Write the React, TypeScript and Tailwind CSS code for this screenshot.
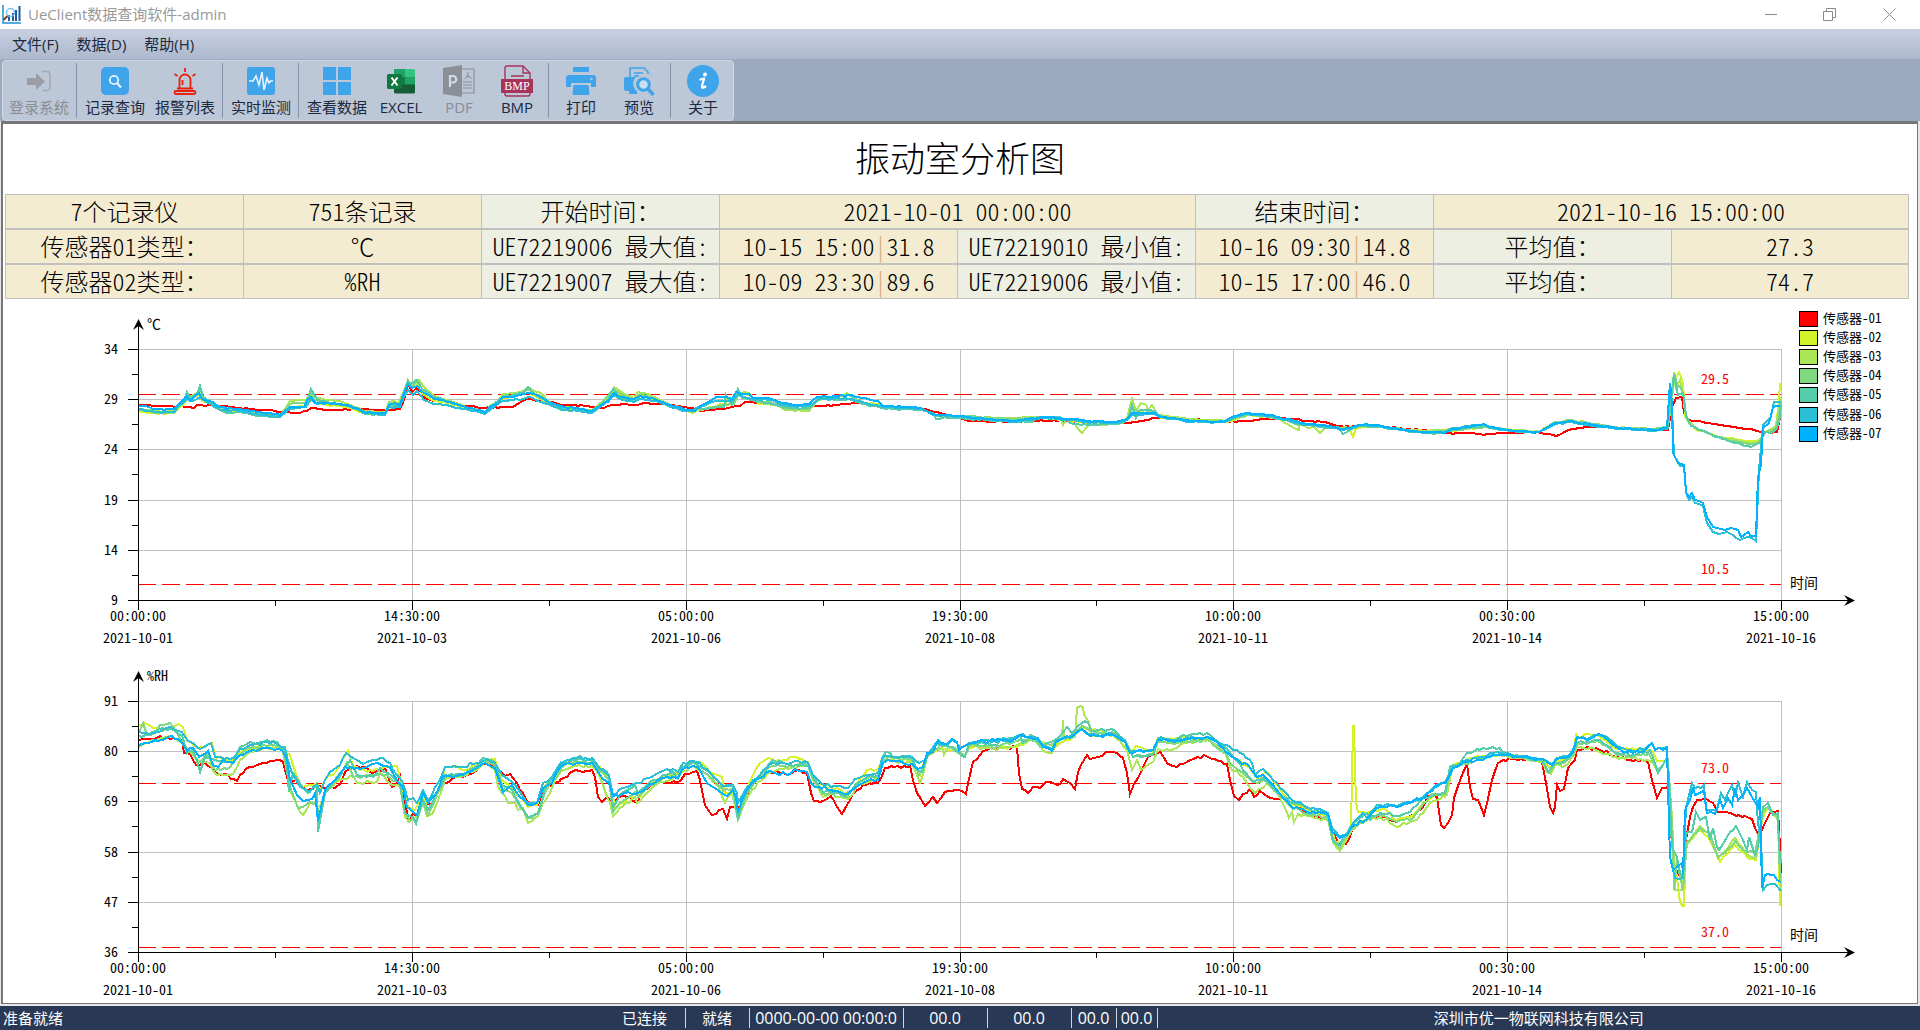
import type { ReactNode } from "react"

// ---------- chart data ----------

interface Tile {
  x: number
  y: number
  sx: number
  sy: number
}

// traces are recorded in tiles, each one with its own origin and resolution
const TEMP_TILES: Tile[] = [
  { x: 90, y: 300, sx: 2.529, sy: 3 },
  { x: 700, y: 300, sx: 2.529, sy: 3 },
  { x: 1300, y: 300, sx: 2.529, sy: 3 },
]

const HUM_TILES: Tile[] = [
  { x: 90, y: 660, sx: 3, sy: 3 },
  { x: 560, y: 660, sx: 3, sy: 3 },
  { x: 1030, y: 660, sx: 3, sy: 3 },
  { x: 1500, y: 660, sx: 3, sy: 3 },
]

const SENSORS = [
  { name: "传感器-01", color: "#ff0000", y: 311 },
  { name: "传感器-02", color: "#d4f22a", y: 330 },
  { name: "传感器-03", color: "#aae655", y: 349 },
  { name: "传感器-04", color: "#80d980", y: 368 },
  { name: "传感器-05", color: "#55ccaa", y: 387 },
  { name: "传感器-06", color: "#2bbfd5", y: 407 },
  { name: "传感器-07", color: "#00b2ff", y: 426 },
]

const TEMP: string[][] = [
  [
    "122,314 150,315 180,319 240,320 262,324 270,316 300,316 345,319 380,324 450,331 500,337 530,338 550,333 560,324 600,331 620,330 680,326 710,329 760,330 785,328 795,300 805,250 815,275 828,265 845,290 870,303 920,310 960,319 1000,324 1040,322 1070,320 1085,308 1105,297 1130,302 1160,306 1200,314 1260,319 1300,324 1320,315 1345,312 1375,314 1410,310 1450,313 1490,319 1530,326 1542,331",
    "0,333 25,330 70,325 100,317 115,305 150,310 210,312 260,316 300,318 340,316 370,312 410,308 460,318 560,326 600,337 640,350 680,363 800,366 830,362 920,362 960,366 1080,370 1120,362 1160,353 1260,358 1320,366 1380,364 1420,357 1500,356 1515,358",
    "0,360 70,368 95,378 200,380 300,389 370,400 430,398 465,405 500,400 600,397 630,402 648,408 680,390 720,380 800,382 860,386 930,390 940,320 950,293 965,290 972,340 985,360 1060,375 1140,388 1165,397 1207,397 1213,350 1215,340",
  ],
  [
    "122,334 165,340 213,340 225,324 245,300 275,286 283,304 300,308 330,328 380,334 430,345 480,352 492,340 505,322 540,318 560,292 570,310 600,316 650,320 690,340 715,344 747,342 757,312 768,310 783,316 793,280 803,250 815,260 826,252 840,282 870,302 910,310 950,324 1000,340 1015,322 1030,316 1045,294 1070,290 1095,282 1110,278 1140,298 1165,314 1200,326 1270,336 1290,318 1310,300 1325,272 1340,288 1375,302 1390,284 1430,300 1460,316 1500,332 1525,338 1542,326",
    "0,330 60,312 80,312 95,280 125,284 150,312 180,308 215,328 275,331 295,302 345,292 375,284 410,308 450,312 470,324 565,328 590,344 700,354 800,362 870,352 1000,370 1060,372 1080,358 1092,338 1150,338 1160,350 1240,362 1325,366 1350,360 1385,345 1460,354 1515,372",
    "0,372 60,380 110,384 125,385 135,410 142,385 190,378 240,386 310,394 385,392 465,382 540,392 605,396 640,370 680,362 730,371 800,384 890,388 928,382 938,330 943,260 947,215 952,235 958,215 968,245 973,350 1000,388 1060,410 1140,424 1160,420 1175,400 1205,378 1211,300 1214,250",
  ],
  [
    "122,326 165,334 213,334 225,316 245,288 260,292 279,268 287,296 300,302 330,324 380,332 430,340 480,346 492,326 505,302 545,300 560,272 570,292 600,299 630,304 660,315 690,332 747,338 757,306 768,302 780,308 793,272 803,240 815,260 822,240 832,240 845,262 870,288 910,304 950,320 1000,336 1015,316 1030,306 1045,282 1075,280 1095,272 1107,262 1140,280 1165,308 1200,322 1270,330 1290,310 1310,296 1325,260 1340,274 1375,294 1385,276 1410,282 1430,292 1460,310 1500,328 1525,334 1542,320",
    "0,330 60,318 68,298 85,312 95,285 105,278 125,278 140,300 165,312 200,318 215,330 275,333 295,300 345,292 372,280 385,292 410,308 450,315 470,326 565,328 590,345 700,352 780,355 850,350 910,352 917,375 925,360 948,372 958,390 967,400 975,385 985,375 1060,372 1080,355 1092,297 1103,332 1115,308 1127,315 1133,330 1142,314 1158,345 1240,358 1325,362 1350,358 1385,345 1460,352 1490,375 1515,390",
    "0,370 20,385 35,382 50,398 65,380 75,385 130,382 190,380 240,386 310,392 385,388 465,380 540,390 605,395 640,368 680,360 730,368 800,382 890,386 928,380 938,320 946,240 952,265 960,240 970,290 975,350 1000,385 1060,412 1140,428 1160,424 1175,395 1205,380 1212,320 1214,290",
  ],
  [
    "122,330 165,338 213,338 225,318 245,292 275,276 287,300 330,322 380,330 430,342 480,348 492,330 505,312 545,308 560,282 570,300 600,308 660,320 690,336 747,340 757,310 783,312 793,276 803,244 815,262 826,244 845,272 870,292 910,306 950,322 1000,338 1015,320 1045,288 1095,280 1107,268 1140,288 1165,312 1200,324 1270,334 1290,314 1325,268 1340,282 1375,298 1390,282 1430,296 1460,312 1500,330 1525,336 1542,322",
    "0,328 60,316 85,312 95,280 125,282 145,306 180,306 215,326 275,328 295,298 345,290 375,284 410,306 470,324 565,328 590,346 700,350 800,358 870,350 1000,368 1060,370 1080,356 1092,330 1150,334 1160,348 1240,362 1325,364 1385,344 1460,352 1515,374",
    "0,370 60,378 110,388 150,378 190,380 240,386 310,398 385,390 465,382 540,392 605,396 640,370 680,360 730,370 800,383 890,388 930,382 940,270 946,218 955,262 962,258 970,290 975,350 990,378 1050,408 1100,424 1140,432 1160,428 1175,398 1205,384 1212,340 1216,312",
  ],
  [
    "122,328 165,336 213,336 225,316 238,300 245,275 252,298 270,284 279,258 287,292 300,302 330,330 345,340 380,336 430,348 465,352 485,346 505,328 545,318 552,298 560,266 568,288 576,300 600,306 660,318 690,338 715,344 747,340 757,318 783,318 793,276 803,243 812,252 826,240 840,266 870,290 910,306 950,322 1000,338 1015,320 1045,290 1095,280 1107,262 1120,280 1165,312 1190,330 1270,332 1290,316 1310,300 1323,268 1335,288 1375,302 1390,288 1430,298 1460,314 1500,330 1525,334 1542,322",
    "0,328 60,320 65,285 80,315 95,266 105,295 130,300 165,308 210,320 250,326 280,322 300,297 350,300 385,300 410,312 470,326 560,330 590,340 597,357 620,352 720,360 800,365 840,365 860,352 910,352 945,372 990,374 1070,370 1082,358 1092,315 1103,355 1112,330 1148,332 1160,350 1240,364 1325,366 1385,340 1460,356 1515,372",
    "0,372 80,385 95,382 110,402 130,388 150,378 190,380 310,398 340,402 380,392 465,378 540,394 605,397 640,372 680,362 730,372 800,384 890,390 930,384 938,300 946,225 955,285 968,280 975,345 990,378 1050,410 1100,428 1140,440 1160,430 1175,395 1190,398 1207,385 1213,350 1216,310",
  ],
  [
    "122,328 165,336 213,336 225,318 245,298 260,302 279,290 290,302 330,330 380,334 430,344 480,350 492,338 505,326 545,322 560,298 575,312 600,310 660,318 690,338 747,344 757,322 783,320 793,290 803,270 817,284 828,272 845,300 870,312 910,318 950,328 1000,342 1015,326 1045,302 1095,298 1110,290 1140,306 1165,316 1200,330 1270,338 1290,322 1325,286 1340,298 1375,306 1390,298 1430,302 1460,316 1500,332 1525,334 1542,318",
    "0,322 20,312 40,302 80,304 95,286 130,297 180,300 210,314 245,320 280,316 300,296 375,296 410,306 462,322 560,326 590,344 650,350 720,358 800,365 870,354 1000,368 1060,370 1080,360 1092,344 1150,342 1160,350 1240,365 1325,367 1345,354 1380,341 1440,348 1515,370",
    "0,373 60,378 90,385 110,391 150,376 190,377 240,388 310,398 370,397 385,385 430,378 465,372 480,384 540,394 605,397 640,374 680,366 730,375 800,386 890,392 928,386 936,250 941,320 946,465 960,497 971,498 975,580 985,600 992,590 1000,608 1018,618 1030,670 1045,695 1060,702 1080,695 1095,705 1112,720 1132,710 1152,722 1160,510 1170,375 1190,350 1200,305 1216,305",
  ],
  [
    "122,318 140,319 170,328 213,327 225,312 245,288 252,303 275,278 283,298 300,302 330,322 380,328 430,337 480,344 492,332 505,320 540,322 550,300 560,290 570,308 600,309 650,315 690,334 715,340 747,338 757,316 768,310 783,316 793,280 803,252 815,265 826,258 840,277 870,296 910,306 950,320 1000,336 1015,318 1030,312 1045,292 1070,290 1095,282 1110,278 1140,290 1165,310 1200,320 1270,332 1290,318 1310,305 1325,278 1340,290 1375,298 1390,287 1430,297 1460,312 1500,326 1530,334 1542,320",
    "0,318 20,305 40,292 65,290 80,298 92,275 105,283 125,283 135,293 180,296 210,308 245,316 275,312 295,290 340,289 375,284 400,292 450,304 462,317 560,323 590,342 650,347 720,356 800,363 870,350 1000,364 1050,366 1080,358 1092,338 1110,340 1150,338 1160,348 1240,363 1325,365 1345,352 1380,338 1440,345 1515,366",
    "0,370 60,375 110,388 150,375 190,375 240,385 310,396 370,396 385,388 430,380 465,373 480,382 540,392 605,396 640,372 680,364 730,373 800,384 890,390 928,384 936,250 940,310 943,460 955,490 970,495 975,575 985,592 992,580 1000,600 1020,608 1030,650 1045,682 1075,690 1090,684 1108,690 1115,712 1132,696 1140,708 1152,708 1158,530 1165,495 1170,385 1185,370 1195,320 1215,318",
  ],
]

const HUM: string[][] = [
  [
    "147,241 180,236 230,232 275,240 282,280 300,283 318,315 345,308 365,325 385,342 415,345 422,357 440,363 450,345 480,322 520,308 560,299 578,305 592,350 600,375 620,360 650,395 680,375 700,385 735,383 752,370 765,335 790,318 820,322 850,338 885,325 905,380 920,372 930,348 945,430 958,484 968,460 980,470 998,400 1010,432 1030,432 1045,390 1060,370 1100,352 1140,343 1170,322 1200,308 1220,325 1245,348 1260,342 1280,370 1300,400 1318,432 1345,436 1360,390 1395,370 1409,362",
    "0,360 20,350 40,333 95,331 105,350 115,412 125,425 140,412 155,424 190,408 215,420 235,424 245,400 285,362 350,368 375,342 410,333 420,360 435,435 455,465 490,448 502,476 510,440 530,440 545,440 570,385 595,352 630,335 690,342 705,332 740,338 752,400 762,423 790,423 812,408 830,440 847,462 860,435 890,390 910,375 955,368 975,323 1050,318 1060,360 1070,400 1095,438 1120,412 1132,430 1155,395 1195,390 1218,402 1225,370 1240,305 1270,272 1300,265 1370,260 1378,340 1387,388 1405,398 1409,392",
    "0,392 10,380 30,383 48,366 90,372 98,358 120,370 135,386 145,335 172,285 180,298 205,292 228,277 250,277 280,295 290,340 300,403 312,372 335,330 355,292 390,277 410,310 440,320 470,305 522,285 545,298 592,312 600,360 613,408 627,420 640,402 660,385 672,412 690,392 713,412 745,418 760,415 790,436 850,465 895,480 905,510 930,560 948,552 970,500 1010,480 1050,468 1100,485 1150,465 1180,440 1195,408 1220,410 1232,495 1242,505 1265,465 1272,415 1295,345 1312,312 1320,380 1330,418 1345,420 1363,465 1372,430 1385,360 1405,308 1409,306",
    "0,305 45,296 100,300 125,305 138,370 150,440 158,460 165,440 170,375 180,392 192,388 205,325 225,300 230,270 265,262 300,270 350,292 400,302 445,305 455,360 472,414 485,384 505,382 510,480 522,620 540,650 550,650 557,540 570,470 590,420 615,413 640,430 655,455 690,458 755,478 765,505 778,528 795,490 810,460 833,452 840,560 843,640",
  ],
  [
    "147,195 165,190 190,205 220,210 265,192 280,200 290,240 325,265 365,250 378,295 430,300 450,275 500,262 580,265 600,285 620,350 635,380 660,375 680,370 690,390 705,360 740,330 775,272 790,315 830,335 885,320 920,318 940,390 955,440 975,450 998,400 1015,450 1045,390 1065,320 1090,320 1130,330 1180,300 1215,298 1235,360 1290,410 1315,440 1340,435 1360,385 1409,320",
    "0,325 20,310 95,308 120,320 150,365 165,440 195,425 225,395 240,410 270,370 340,340 365,325 400,303 420,305 450,335 485,350 495,400 520,395 535,470 555,400 575,350 600,310 625,293 645,305 700,292 745,305 760,345 785,375 830,385 865,400 890,370 920,330 955,328 970,300 1055,302 1080,345 1100,285 1140,265 1180,270 1215,285 1228,262 1370,262 1409,240",
    "0,238 55,248 70,262 130,232 160,200 250,225 300,275 318,258 370,275 385,235 530,235 600,285 660,325 680,355 710,335 740,375 780,430 895,470 915,545 940,545 963,500 966,352 968,198 972,198 975,320 978,430 985,455 1010,460 1060,445 1100,480 1150,465 1180,430 1215,405 1245,410 1265,320 1310,300 1340,288 1409,285",
    "0,285 60,292 125,300 150,325 170,300 200,300 222,275 228,218 235,235 265,222 300,232 350,268 440,270 460,275 470,302 490,302 505,300 515,560 530,650 537,710 547,738 553,738 558,550 600,510 625,530 660,605 690,570 705,555 740,590 768,600 785,480 805,445 835,475 840,737",
  ],
  [
    "147,262 165,250 205,238 240,228 275,245 300,275 325,300 360,310 380,345 430,342 450,300 480,275 550,262 580,275 600,390 620,435 640,466 660,430 675,430 690,440 710,390 750,360 790,345 800,370 860,365 870,340 900,372 930,378 945,470 958,486 980,470 998,430 1012,468 1030,460 1045,420 1065,358 1110,350 1150,335 1190,305 1215,330 1225,380 1255,428 1275,430 1285,450 1300,445 1315,488 1345,468 1360,430 1380,400 1395,360 1409,340",
    "0,335 40,318 95,318 115,340 140,410 150,430 160,468 180,445 225,410 232,430 260,400 290,372 330,360 360,340 400,318 430,340 470,370 495,430 515,400 533,480 550,440 575,390 625,340 650,330 745,315 760,360 790,410 815,400 840,410 865,418 890,375 955,355 965,310 985,300 1055,310 1080,368 1090,345 1100,290 1145,262 1153,285 1165,262 1215,285 1230,258 1300,268 1350,262 1370,255 1409,240",
    "0,240 30,250 38,272 65,280 80,250 95,235 98,180 102,235 135,232 140,145 158,140 163,165 178,185 182,225 250,225 290,270 307,330 320,300 333,330 345,320 370,305 385,268 400,272 440,265 460,248 535,240 585,275 600,322 640,352 660,385 675,400 710,370 745,400 778,475 785,455 793,485 805,462 860,475 895,480 910,545 930,572 955,530 985,485 1050,470 1100,500 1160,480 1200,430 1250,405 1265,325 1310,302 1380,288 1409,286",
    "0,286 60,294 125,305 140,335 152,342 165,315 195,318 222,285 230,262 270,265 340,290 440,300 460,310 475,335 500,295 507,360 517,470 525,690 545,690 558,555 600,498 625,520 655,595 705,535 740,585 768,595 790,460 805,440 835,480 842,690",
  ],
  [
    "147,220 160,190 170,225 195,220 210,195 240,190 260,215 285,265 310,280 325,310 350,280 375,330 420,320 445,290 470,265 550,255 580,268 600,380 625,445 640,440 660,425 680,435 687,470 705,400 750,350 770,305 790,350 860,345 890,345 930,375 945,460 960,480 980,480 1000,425 1015,465 1045,400 1065,352 1110,348 1150,330 1185,300 1215,315 1235,385 1265,400 1290,440 1315,475 1345,462 1365,395 1409,332",
    "0,330 20,308 95,306 112,325 148,360 160,455 180,430 225,395 235,410 270,375 340,342 355,358 370,325 400,308 430,335 460,360 490,392 518,385 535,470 545,440 575,378 625,325 645,318 690,318 745,312 760,355 790,402 830,400 860,412 885,378 920,355 955,350 967,302 985,292 1055,300 1078,345 1090,330 1100,288 1140,256 1180,262 1215,288 1230,255 1310,260 1380,240 1409,238",
    "0,238 40,262 75,245 130,225 155,198 175,208 185,222 245,216 285,244 310,290 370,282 385,245 440,250 530,238 590,285 600,310 650,350 680,370 700,360 740,398 780,438 830,462 895,475 910,545 930,565 960,510 1010,480 1050,465 1100,485 1150,475 1200,405 1245,402 1265,320 1330,305 1380,285 1409,284",
    "0,284 60,292 125,302 148,340 168,310 192,310 222,280 232,252 300,245 350,284 400,290 448,282 475,330 500,292 510,384 518,560 523,690 530,600 550,690 560,545 600,505 630,520 655,590 675,580 705,542 730,570 765,580 790,450 805,440 833,475 840,660",
  ],
  [
    "147,228 175,225 210,208 240,208 275,225 290,280 310,270 330,335 345,292 375,300 430,305 450,262 470,252 550,243 585,262 597,395 610,340 640,385 655,400 680,380 685,515 695,450 705,400 750,340 780,300 800,345 850,352 870,325 895,340 930,370 945,460 970,470 978,492 998,420 1015,450 1045,390 1065,345 1110,345 1150,325 1180,294 1215,305 1235,375 1265,390 1290,435 1315,470 1345,460 1365,385 1409,325",
    "0,322 20,300 95,300 110,320 148,345 160,440 180,405 225,375 235,400 270,365 340,335 355,355 370,320 400,306 430,325 460,350 490,380 518,375 535,480 545,430 575,375 625,315 640,300 690,315 745,318 760,350 790,395 830,395 855,412 885,375 920,350 955,345 965,295 978,275 1000,290 1055,295 1070,330 1085,335 1100,290 1130,250 1175,262 1195,275 1215,292 1228,248 1310,255 1320,240 1380,228 1390,250 1409,226",
    "0,225 40,255 75,240 100,215 112,202 125,220 155,188 175,190 185,212 245,208 285,240 310,290 370,285 385,238 440,238 460,225 530,220 600,275 640,330 670,365 700,355 740,395 780,425 895,465 910,540 930,555 960,500 1010,458 1020,480 1050,460 1110,468 1140,455 1180,415 1245,400 1260,320 1290,310 1310,280 1360,265 1409,264",
    "0,268 20,278 60,290 125,300 145,335 165,310 190,305 220,280 232,248 300,240 350,280 400,285 450,270 462,300 475,340 500,290 505,300 515,560 530,590 540,640 550,650 557,520 575,515 588,455 600,480 618,470 630,540 640,505 650,560 657,570 680,530 708,498 725,535 740,570 748,530 765,585 775,560 790,440 805,428 820,465 833,460 838,560 843,610",
  ],
  [
    "147,216 180,222 205,215 240,202 275,215 290,240 310,250 330,268 362,250 375,290 430,295 450,268 500,250 550,247 585,265 605,340 630,380 660,395 680,372 690,400 705,360 720,335 750,315 768,280 800,300 820,312 870,294 900,308 920,345 940,370 955,420 970,415 980,430 998,390 1015,420 1045,370 1065,322 1110,322 1160,308 1190,298 1215,308 1235,345 1265,365 1290,395 1315,430 1340,430 1360,370 1385,350 1409,312",
    "0,318 20,300 50,293 95,295 110,312 148,348 158,405 190,385 230,368 265,355 300,335 340,328 355,335 370,310 400,303 420,310 450,340 490,378 520,375 530,400 535,430 560,380 590,355 610,330 640,310 680,312 705,302 745,310 760,345 785,372 830,378 865,385 885,358 920,345 955,340 970,290 1055,292 1078,308 1095,300 1110,275 1130,245 1160,255 1175,240 1190,248 1200,265 1230,250 1265,242 1340,242 1380,224 1409,230",
    "0,232 25,235 40,258 65,268 78,242 130,226 155,206 180,226 250,222 285,242 300,275 368,270 385,236 440,240 530,230 600,262 620,270 665,308 675,345 700,328 740,370 780,415 830,440 895,458 905,505 930,530 950,522 970,490 1000,458 1012,475 1040,435 1110,436 1170,418 1215,378 1245,366 1270,322 1310,300 1350,292 1390,280 1409,280",
    "0,280 60,288 125,296 155,312 170,295 205,288 220,270 230,232 270,235 295,225 325,235 355,260 380,270 430,270 455,248 465,268 500,262 505,380 510,590 525,655 550,655 557,440 577,368 585,385 612,375 618,450 650,450 662,398 675,420 695,375 705,410 715,370 730,410 742,365 755,390 768,395 775,490 783,540 790,690 800,675 825,672 842,692",
  ],
  [
    "147,256 165,248 205,243 235,230 265,238 290,272 310,265 328,290 355,272 370,315 385,322 400,300 430,310 450,285 490,270 540,263 575,270 590,300 600,360 620,405 640,424 665,418 675,400 685,482 695,430 705,390 740,355 765,322 810,328 860,308 900,325 925,365 940,380 950,440 970,455 980,465 998,400 1015,430 1045,390 1060,348 1100,348 1150,330 1185,308 1215,325 1230,370 1240,395 1265,375 1290,410 1315,435 1340,430 1360,385 1385,370 1400,332 1409,325",
    "0,322 15,312 50,310 95,310 110,330 130,358 148,370 158,408 195,400 235,400 260,382 300,358 340,350 355,355 365,330 400,318 420,330 440,368 465,385 500,408 518,390 528,410 533,460 545,420 575,370 600,355 630,332 650,342 690,342 705,328 740,335 752,370 775,382 840,395 865,402 885,385 920,362 955,360 968,310 985,300 1030,308 1055,312 1075,328 1090,322 1100,280 1120,275 1135,240 1160,252 1175,238 1190,245 1198,270 1225,252 1265,240 1280,248 1295,238 1340,240 1350,245 1380,225 1409,232",
    "0,235 25,238 40,262 65,272 78,245 100,235 130,228 155,208 180,228 250,225 285,245 300,278 370,270 385,240 440,242 530,232 560,245 605,292 655,315 680,350 700,345 740,390 780,435 830,455 895,462 905,515 930,535 950,525 970,495 1000,485 1050,440 1110,438 1150,422 1185,412 1215,380 1245,370 1270,325 1310,305 1350,300 1390,284 1409,284",
    "0,284 60,290 125,298 155,315 170,298 205,290 220,275 230,235 270,238 295,222 325,240 355,265 380,275 430,275 455,248 465,270 500,265 505,380 510,590 520,630 545,610 550,640 555,450 570,420 580,380 585,405 612,392 622,460 645,462 660,420 670,445 685,415 695,435 705,385 715,420 740,385 755,410 775,440 780,410 785,685 795,645 822,645 830,660 842,665",
  ],
]

function toPoints(parts: string[], tiles: Tile[], ripple: number, seed: number) {
  const pts = parts.flatMap((part, i) =>
    part.split(" ").map((pair) => {
      const [u, v] = pair.split(",").map(Number)
      return [tiles[i].x + u / tiles[i].sx, tiles[i].y + v / tiles[i].sy]
    })
  )
  const out: string[] = []
  for (let i = 0; i < pts.length - 1; i++) {
    const [x0, y0] = pts[i]
    const [x1, y1] = pts[i + 1]
    out.push(`${Math.round(x0)},${Math.round(y0)}`)
    const n = Math.floor((x1 - x0) / 3)
    for (let k = 1; k < n; k++) {
      const x = x0 + ((x1 - x0) * k) / n
      const y = y0 + ((y1 - y0) * k) / n
      const noise = Math.sin(x * 1.7 + seed * 5) * Math.cos(x * 0.61 + seed) * ripple
      out.push(`${Math.round(x)},${Math.round(y + noise)}`)
    }
  }
  const last = pts[pts.length - 1]
  out.push(`${Math.round(last[0])},${Math.round(last[1])}`)
  return out.join(" ")
}

// ---------- chart ----------

const TIMES = [
  { x: 138, time: "00:00:00", date: "2021-10-01" },
  { x: 412, time: "14:30:00", date: "2021-10-03" },
  { x: 686, time: "05:00:00", date: "2021-10-06" },
  { x: 960, time: "19:30:00", date: "2021-10-08" },
  { x: 1233, time: "10:00:00", date: "2021-10-11" },
  { x: 1507, time: "00:30:00", date: "2021-10-14" },
  { x: 1781, time: "15:00:00", date: "2021-10-16" },
]

const ROWS = [0, 50, 100, 151, 201, 251]

interface PlotProps {
  top: number
  unit: string
  ticks: number[]
  limits: { y: number; label: string }[]
  series: string[][]
  tiles: Tile[]
  ripple: number
}

function Plot({ top, unit, ticks, limits, series, tiles, ripple }: PlotProps) {
  const bottom = top + 251
  return (
    <g>
      <g stroke="#c0c0c0" shapeRendering="crispEdges">
        {ROWS.slice(0, 5).map((r) => (
          <line key={r} x1={138} x2={1781} y1={top + r + 0.5} y2={top + r + 0.5} />
        ))}
        {TIMES.slice(1).map((t) => (
          <line key={t.x} x1={t.x + 0.5} x2={t.x + 0.5} y1={top} y2={bottom} />
        ))}
      </g>

      <g stroke="#ff0000" strokeDasharray="18 6" shapeRendering="crispEdges">
        {limits.map((l) => (
          <line key={l.label} x1={138} x2={1781} y1={l.y + 0.5} y2={l.y + 0.5} />
        ))}
      </g>

      <g fill="none" strokeWidth="2" shapeRendering="crispEdges">
        {series.map((parts, i) => (
          <polyline key={i} points={toPoints(parts, tiles, ripple, i)} stroke={SENSORS[i].color} />
        ))}
      </g>

      <g stroke="#000" shapeRendering="crispEdges">
        <line x1={138.5} x2={138.5} y1={top - 26} y2={bottom + 10} />
        <line x1={128} x2={1850} y1={bottom + 0.5} y2={bottom + 0.5} />
        {ROWS.slice(0, 5).map((r) => (
          <g key={r}>
            <line x1={128} x2={138} y1={top + r + 0.5} y2={top + r + 0.5} />
            <line x1={132} x2={138} y1={top + r + 25.5} y2={top + r + 25.5} />
          </g>
        ))}
        {TIMES.slice(1).map((t) => (
          <g key={t.x}>
            <line x1={t.x + 0.5} x2={t.x + 0.5} y1={bottom} y2={bottom + 10} />
            <line x1={t.x - 136.5} x2={t.x - 136.5} y1={bottom} y2={bottom + 6} />
          </g>
        ))}
      </g>
      <path d={`M138.5 ${top - 30}l5.500 11-5.500-4-5.500 4z`} />
      <path d={`M1855 ${bottom + 0.5}l-11 5.500 4-5.500-4-5.500z`} />

      <text x={147} y={top - 20}>{unit}</text>
      {ticks.map((t, i) => (
        <text key={t} x={118} y={top + ROWS[i] + 5} textAnchor="end">{t}</text>
      ))}
      {TIMES.map((t) => (
        <g key={t.x} textAnchor="middle">
          <text x={t.x} y={bottom + 21}>{t.time}</text>
          <text x={t.x} y={bottom + 43}>{t.date}</text>
        </g>
      ))}
      {limits.map((l) => (
        <text key={l.label} x={1701} y={l.y - 10} fill="#ff0000">{l.label}</text>
      ))}
      <text x={1790} y={bottom - 12}>时间</text>
    </g>
  )
}

function Charts() {
  return (
    <svg
      viewBox="3 299 1914 704"
      className="block w-full text-[14px]"
      role="img"
      aria-label="振动室分析图"
    >
      <Plot
        top={349}
        unit="℃"
        ticks={[34, 29, 24, 19, 14, 9]}
        limits={[{ y: 394, label: "29.5" }, { y: 584, label: "10.5" }]}
        series={TEMP}
        tiles={TEMP_TILES}
        ripple={0.6}
      />
      <Plot
        top={701}
        unit="%RH"
        ticks={[91, 80, 69, 58, 47, 36]}
        limits={[{ y: 783, label: "73.0" }, { y: 947, label: "37.0" }]}
        series={HUM}
        tiles={HUM_TILES}
        ripple={1.6}
      />
      {SENSORS.map((s) => (
        <g key={s.name}>
          <rect x={1799.5} y={s.y + 0.5} width={18} height={15} fill={s.color} stroke="#000" shapeRendering="crispEdges" />
          <text x={1823} y={s.y + 12} className="text-[13px]">{s.name}</text>
        </g>
      ))}
    </svg>
  )
}

// ---------- summary table ----------

const VALUE = "h-[35px] border-y border-l border-[#c0c0c0] bg-[#f4ecd1] p-0 pb-[2px] text-center font-light last:border-r"
const LABEL = "h-[35px] border-y border-l border-[#c0c0c0] bg-[#eeefe3] p-0 pb-[2px] text-center font-light last:border-r"

interface SensorRow {
  type: string
  unit: string
  maxName: string
  maxTime: string
  max: string
  minName: string
  minTime: string
  min: string
  avg: string
}

const SENSOR_ROWS: SensorRow[] = [
  { type: "传感器01类型：", unit: "℃", maxName: "UE72219006 最大值:", maxTime: "10-15 15:00", max: "31.8", minName: "UE72219010 最小值:", minTime: "10-16 09:30", min: "14.8", avg: "27.3" },
  { type: "传感器02类型：", unit: "%RH", maxName: "UE72219007 最大值:", maxTime: "10-09 23:30", max: "89.6", minName: "UE72219006 最小值:", minTime: "10-15 17:00", min: "46.0", avg: "74.7" },
]

function SummaryTable() {
  return (
    <div className="pr-2 pl-[2px]">
      <table className="w-full table-fixed border-separate border-spacing-0 text-[24px] leading-[30px] whitespace-nowrap">
        <tbody>
          <tr>
            <td className={VALUE}>7个记录仪</td>
            <td className={VALUE}>751条记录</td>
            <th className={LABEL}>开始时间：</th>
            <td className={VALUE} colSpan={2}>2021-10-01 00:00:00</td>
            <th className={LABEL}>结束时间：</th>
            <td className={VALUE} colSpan={2}>2021-10-16 15:00:00</td>
          </tr>
          {SENSOR_ROWS.map((row) => (
            <tr key={row.type}>
              <th className={VALUE}>{row.type}</th>
              <td className={VALUE}>{row.unit}</td>
              <th className={LABEL}>{row.maxName}</th>
              <td className={VALUE}>{row.maxTime}<span className="text-[#d9a878]">|</span>{row.max}</td>
              <th className={LABEL}>{row.minName}</th>
              <td className={VALUE}>{row.minTime}<span className="text-[#d9a878]">|</span>{row.min}</td>
              <th className={LABEL}>平均值：</th>
              <td className={VALUE}>{row.avg}</td>
            </tr>
          ))}
        </tbody>
      </table>
    </div>
  )
}

// ---------- icons ----------

function AppIcon() {
  return (
    <svg width="20" height="20" viewBox="0 0 20 20" fill="none">
      <path d="M1 1v18h18" stroke="#1b8fd2" strokeWidth="1.500" />
      <path d="M7 17v-6M11 17V9M14 17V6M17.500 17V2" stroke="#1d5c9c" strokeWidth="2" />
      <circle cx="8.500" cy="8.500" r="4" stroke="#7cc4ee" strokeWidth="1.500" />
      <path d="M5.500 12L1.500 16" stroke="#7a3b2e" strokeWidth="2" />
    </svg>
  )
}

function LoginIcon() {
  return (
    <svg width="32" height="32" viewBox="0 0 32 32" fill="none">
      <path d="M4 13h9V8l9 8.500-9 8.500v-5H4z" fill="#9a9da3" />
      <path d="M19 6.500h5a3 3 0 0 1 3 3v13a3 3 0 0 1-3 3h-5" stroke="#a4a8b0" strokeWidth="1.500" />
    </svg>
  )
}

function QueryIcon() {
  return (
    <svg width="32" height="32" viewBox="0 0 32 32" fill="none">
      <rect x="2" y="2" width="28" height="28" rx="5" fill="#3fa4ea" />
      <circle cx="15" cy="15" r="4.200" stroke="#e8f3fc" strokeWidth="1.800" />
      <path d="M18 18l4 4.500" stroke="#e8f3fc" strokeWidth="2.200" />
    </svg>
  )
}

function AlarmIcon() {
  return (
    <svg width="32" height="32" viewBox="0 0 32 32" fill="none" stroke="#e8220c" strokeWidth="1.800">
      <path d="M10.500 23v-8a5.500 5.500 0 0 1 11 0v8" />
      <path d="M13.500 20v-5" />
      <path d="M16 3v4M5.500 9l3 2M26.500 9l-3 2M8 23.500h16" />
      <rect x="5.500" y="26" width="21" height="3" rx="1.500" />
    </svg>
  )
}

function MonitorIcon() {
  return (
    <svg width="32" height="32" viewBox="0 0 32 32" fill="none">
      <rect x="2" y="2" width="28" height="28" rx="3" fill="#3fa4ea" />
      <path d="M4 16h4l3-5 3 9 3-13 2 18 3-12 2 5 1.500-2H28" stroke="#e8f3fc" strokeWidth="1.600" />
    </svg>
  )
}

function GridIcon() {
  return (
    <svg width="32" height="32" viewBox="0 0 32 32" fill="#3fa4ea">
      <path d="M2 2h13v13H2zM17 2h13v13H17zM2 17h13v13H2zM17 17h13v13H17z" />
    </svg>
  )
}

function ExcelIcon() {
  return (
    <svg width="32" height="32" viewBox="0 0 32 32">
      <path d="M9 4h11v8H9z" fill="#21a366" />
      <path d="M20 4h8a2 2 0 0 1 2 2v6H20z" fill="#33c481" />
      <path d="M9 12h11v8H9z" fill="#107c41" />
      <path d="M20 12h10v8H20z" fill="#21a366" />
      <path d="M9 20h21v7a1.500 1.500 0 0 1-1.500 1.500h-18A1.500 1.500 0 0 1 9 27z" fill="#185c37" />
      <path d="M20 20h10v-1H20z" fill="#107c41" />
      <rect x="2" y="9" width="15" height="15" rx="1.500" fill="#10793f" />
      <path d="M6.500 12.500l6 8M12.500 12.500l-6 8" stroke="#fff" strokeWidth="2" />
    </svg>
  )
}

function PdfIcon() {
  return (
    <svg width="32" height="32" viewBox="0 0 32 32" fill="none">
      <path d="M0 3l19-3v32L0 29z" fill="#8b9096" />
      <path d="M7 22V11h3a3.200 3.200 0 0 1 0 6.500H7" stroke="#d5dbe4" strokeWidth="2.200" />
      <path d="M19 4h12v24H19" stroke="#8b9096" strokeWidth="1.200" />
      <path d="M25 7c0 3-1 5-3.500 7M25 10c1 2 2 3 4 3.500M23 12l4-.5M20 17h9M20 20h9M20 23h9" stroke="#8b9096" />
    </svg>
  )
}

function BmpIcon() {
  return (
    <svg width="32" height="32" viewBox="0 0 32 32" fill="none">
      <path d="M4 14V3a2 2 0 0 1 2-2h16l7 7v6M22 1v7h7M4 28v1a2 2 0 0 0 2 2h21a2 2 0 0 0 2-2v-1M10 11h13" stroke="#a8345a" strokeWidth="1.400" />
      <rect y="14" width="32" height="14" fill="#a8345a" />
      <text x="16" y="25" textAnchor="middle" fill="#fff" className="font-['Liberation_Serif',serif] text-[12px]">BMP</text>
    </svg>
  )
}

function PrintIcon() {
  return (
    <svg width="32" height="32" viewBox="0 0 32 32" fill="#3fa4ea">
      <path d="M8 2h16v5H8z" />
      <path d="M4 10h24a3 3 0 0 1 3 3v8a1 1 0 0 1-1 1h-4v-4H6v4H2a1 1 0 0 1-1-1v-8a3 3 0 0 1 3-3z" />
      <path d="M8.500 20h15l1 9a1 1 0 0 1-1 1h-15a1 1 0 0 1-1-1z" />
      <circle cx="26.500" cy="14" r="1.200" fill="#bcc7d8" />
    </svg>
  )
}

function PreviewIcon() {
  return (
    <svg width="32" height="32" viewBox="0 0 32 32" fill="none">
      <path d="M7 14V3h14l4 4v2" stroke="#3fa4ea" strokeWidth="1.600" />
      <path d="M11 8h9M11 11h5" stroke="#3fa4ea" strokeWidth="1.500" />
      <path d="M1 14a2 2 0 0 1 2-2h10a9 9 0 0 0 1 14v3H6v-3H3a2 2 0 0 1-2-2z" fill="#3fa4ea" />
      <circle cx="20.500" cy="19.500" r="5.800" stroke="#3fa4ea" strokeWidth="3" fill="#c9ddf1" />
      <path d="M25 24l5.500 6" stroke="#3fa4ea" strokeWidth="3.600" />
      <path d="M26 8l4 4M28 7l2 2" stroke="#8fc6ee" />
    </svg>
  )
}

function AboutIcon() {
  return (
    <svg width="32" height="32" viewBox="0 0 32 32">
      <circle cx="16" cy="16" r="16" fill="#3fa4ea" />
      <circle cx="18" cy="9.500" r="2" fill="#fff" />
      <path d="M12.500 15c2-1 3.500-1.500 4.500-1.500-.5 3-2 6-2 8.500 0 1.500 2 .5 4-1" fill="none" stroke="#fff" strokeWidth="2.200" />
    </svg>
  )
}

// ---------- toolbar ----------

interface ToolButtonProps {
  label: string
  icon: ReactNode
  disabled?: boolean
  wide?: boolean
}

function ToolButton({ label, icon, disabled, wide }: ToolButtonProps) {
  return (
    <button
      type="button"
      disabled={disabled}
      className={`${wide ? "w-[70px]" : "w-[58px]"} flex flex-col items-center pt-1 text-[15px] leading-5 text-[#1b293e] disabled:text-[#8a8d92]`}
    >
      {icon}
      {label}
    </button>
  )
}

function Separator() {
  return <div className="my-[2px] ml-[2px] w-1 border-l border-[#8592a8]" />
}

function Toolbar() {
  return (
    <div className="flex h-[62px] bg-[#9ba9c1] pt-px pl-[2px]">
      <div className="flex rounded-sm border border-[#cfd7e4] bg-[#bcc7d8] px-px">
        <ToolButton wide disabled label="登录系统" icon={<LoginIcon />} />
        <Separator />
        <ToolButton wide label="记录查询" icon={<QueryIcon />} />
        <ToolButton wide label="报警列表" icon={<AlarmIcon />} />
        <Separator />
        <ToolButton wide label="实时监测" icon={<MonitorIcon />} />
        <Separator />
        <ToolButton wide label="查看数据" icon={<GridIcon />} />
        <ToolButton label="EXCEL" icon={<ExcelIcon />} />
        <ToolButton disabled label="PDF" icon={<PdfIcon />} />
        <ToolButton label="BMP" icon={<BmpIcon />} />
        <Separator />
        <ToolButton label="打印" icon={<PrintIcon />} />
        <ToolButton label="预览" icon={<PreviewIcon />} />
        <Separator />
        <ToolButton label="关于" icon={<AboutIcon />} />
      </div>
    </div>
  )
}

// ---------- frame ----------

function TitleBar() {
  return (
    <header className="flex h-[29px] items-center justify-between bg-white pb-px pl-[2px]">
      <div className="flex items-center gap-[6px] text-[15px] leading-5 text-[#999999]">
        <AppIcon />
        <span>UeClient数据查询软件-admin</span>
      </div>
      <div className="flex text-[#8a8a8a]">
        <button type="button" aria-label="最小化" className="grid h-7 w-[58px] place-items-center">
          <svg width="12" height="12" stroke="currentColor"><path d="M0 6.500h12" /></svg>
        </button>
        <button type="button" aria-label="还原" className="grid h-7 w-[58px] place-items-center">
          <svg width="13" height="13" fill="none" stroke="currentColor"><path d="M.5 3.500h9v9h-9zM3.500 3V.5h9v9H10" /></svg>
        </button>
        <button type="button" aria-label="关闭" className="grid h-7 w-[62px] place-items-center">
          <svg width="13" height="13" stroke="currentColor"><path d="M.5.5l12 12M12.500.5l-12 12" /></svg>
        </button>
      </div>
    </header>
  )
}

function MenuBar() {
  return (
    <nav className="flex h-[30px] items-center gap-[18px] bg-linear-to-b from-[#c9d1e1] to-[#adb8ce] pl-3 text-[15px] leading-5 text-[#1b293e]">
      <button type="button">文件(F)</button>
      <button type="button">数据(D)</button>
      <button type="button">帮助(H)</button>
    </nav>
  )
}

const CELL = "my-[2px] overflow-hidden border-r border-[#d0d5de] text-center"
const NUMBER_CELL = "my-[2px] overflow-hidden border-r border-[#d0d5de] text-center text-base leading-5"

function StatusBar() {
  return (
    <footer className="grid h-6 grid-cols-[605fr_81px_64px_154px_84px_84px_45px_41px_763fr] bg-[#293955] text-[15px] leading-5 whitespace-nowrap text-white">
      <div className="my-[2px] pl-[3px]">准备就绪</div>
      <div className={CELL}>已连接</div>
      <div className={CELL}>就绪</div>
      <div className={NUMBER_CELL}>0000-00-00 00:00:0</div>
      <div className={NUMBER_CELL}>00.0</div>
      <div className={NUMBER_CELL}>00.0</div>
      <div className={NUMBER_CELL}>00.0</div>
      <div className={NUMBER_CELL}>00.0</div>
      <div className="my-[2px] text-center">深圳市优一物联网科技有限公司</div>
    </footer>
  )
}

export default function App() {
  return (
    <div className="flex min-h-screen flex-col bg-[#e6e6e6] font-['Open_Sans','Noto_Sans_CJK_SC',sans-serif]">
      <TitleBar />
      <MenuBar />
      <Toolbar />
      <main className="mr-[2px] mb-[2px] ml-px grow border-t-3 border-r border-b border-l-2 border-[#767676] bg-white font-['Noto_Sans_CJK_SC',sans-serif] text-black [font-feature-settings:'hwid']">
        <h1 className="h-[70px] text-center text-[35px] leading-[66px] font-light">振动室分析图</h1>
        <SummaryTable />
        <Charts />
      </main>
      <StatusBar />
    </div>
  )
}
